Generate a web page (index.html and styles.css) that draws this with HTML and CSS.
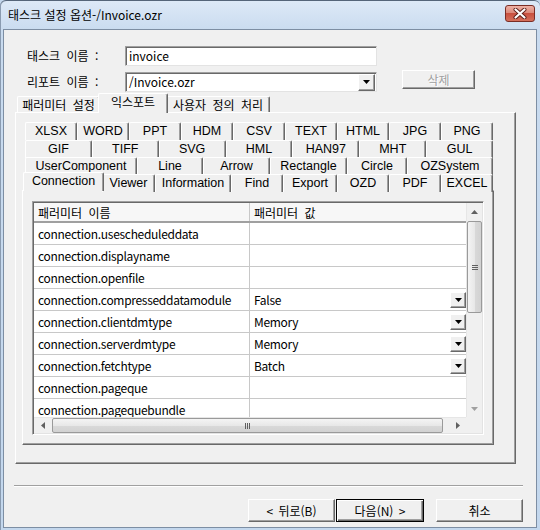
FILE: index.html
```html
<!DOCTYPE html>
<html lang="ko">
<head>
<meta charset="utf-8">
<title>태스크 설정 옵션</title>
<link rel="stylesheet" href="styles.css">
</head>
<body>
<div class="window">
  <div class="titlebar">
    <span class="title">태스크 설정 옵션-/Invoice.ozr</span>
    <div class="close">
      <svg width="14" height="11" viewBox="0 0 14 11"><path d="M2.5 1.5 L11.5 9.5 M11.5 1.5 L2.5 9.5" stroke="#5a1d17" stroke-width="4" stroke-linecap="round"/><path d="M2.5 1.5 L11.5 9.5 M11.5 1.5 L2.5 9.5" stroke="#fff" stroke-width="2.2" stroke-linecap="round"/></svg>
    </div>
  </div>
  <div class="client">
    <div class="frow">
      <span class="lbl">태스크 이름 :</span>
      <div class="textbox">invoice</div>
    </div>
    <div class="frow frow2">
      <span class="lbl">리포트 이름 :</span>
      <div class="combo"><span class="cval">/Invoice.ozr</span><span class="dd ddc"><svg width="7" height="4" viewBox="0 0 7 4"><polygon points="0,0 7,0 3.5,4" fill="#000"/></svg></span></div>
      <div class="btn btn-del">삭제</div>
    </div>
    <div class="mtabs">
      <div class="mtab mt1">패러미터 설정</div>
      <div class="mtab mt2 sel">익스포트</div>
      <div class="mtab mt3">사용자 정의 처리</div>
    </div>
    <div class="mpanel">
      <div class="itabs">
        <div class="trow r1">
          <div class="tab eq">XLSX</div><div class="tab eq">WORD</div><div class="tab eq">PPT</div><div class="tab eq">HDM</div><div class="tab eq">CSV</div><div class="tab eq">TEXT</div><div class="tab eq">HTML</div><div class="tab eq">JPG</div><div class="tab eq">PNG</div>
        </div>
        <div class="trow r2">
          <div class="tab eq">GIF</div><div class="tab eq">TIFF</div><div class="tab eq">SVG</div><div class="tab eq">HML</div><div class="tab eq">HAN97</div><div class="tab eq">MHT</div><div class="tab eq">GUL</div>
        </div>
        <div class="trow r3">
          <div class="tab w112">UserComponent</div><div class="tab w66">Line</div><div class="tab w67">Arrow</div><div class="tab w77">Rectangle</div><div class="tab w60">Circle</div><div class="tab w86">OZSystem</div>
        </div>
        <div class="trow r4">
          <div class="tab w77 tsel">Connection</div><div class="tab w53">Viewer</div><div class="tab w76">Information</div><div class="tab w52">Find</div><div class="tab w54">Export</div><div class="tab w52">OZD</div><div class="tab w52">PDF</div><div class="tab w52">EXCEL</div>
        </div>
      </div>
      <div class="ipanel">
        <div class="grid">
          <div class="data">
            <div class="row hdr"><div class="c1">패러미터 이름</div><div class="c2">패러미터 값</div></div>
            <div class="row"><div class="c1">connection.usescheduleddata</div><div class="c2"></div></div>
            <div class="row"><div class="c1">connection.displayname</div><div class="c2"></div></div>
            <div class="row"><div class="c1">connection.openfile</div><div class="c2"></div></div>
            <div class="row"><div class="c1">connection.compresseddatamodule</div><div class="c2"><span class="cv">False</span><span class="dd"><svg width="7" height="4" viewBox="0 0 7 4"><polygon points="0,0 7,0 3.5,4" fill="#000"/></svg></span></div></div>
            <div class="row"><div class="c1">connection.clientdmtype</div><div class="c2"><span class="cv">Memory</span><span class="dd"><svg width="7" height="4" viewBox="0 0 7 4"><polygon points="0,0 7,0 3.5,4" fill="#000"/></svg></span></div></div>
            <div class="row"><div class="c1">connection.serverdmtype</div><div class="c2"><span class="cv">Memory</span><span class="dd"><svg width="7" height="4" viewBox="0 0 7 4"><polygon points="0,0 7,0 3.5,4" fill="#000"/></svg></span></div></div>
            <div class="row"><div class="c1">connection.fetchtype</div><div class="c2"><span class="cv">Batch</span><span class="dd"><svg width="7" height="4" viewBox="0 0 7 4"><polygon points="0,0 7,0 3.5,4" fill="#000"/></svg></span></div></div>
            <div class="row"><div class="c1">connection.pageque</div><div class="c2"></div></div>
            <div class="row"><div class="c1">connection.pagequebundle</div><div class="c2"></div></div>
          </div>
          <div class="vsb">
            <div class="sbtn"><svg width="7" height="4" viewBox="0 0 7 4"><polygon points="0,4 7,4 3.5,0" fill="#606060"/></svg></div>
            <div class="vthumb"><span class="grip-h"></span></div>
            <div class="sfill"></div>
            <div class="sbtn"><svg width="7" height="4" viewBox="0 0 7 4"><polygon points="0,0 7,0 3.5,4" fill="#a0a0a0"/></svg></div>
          </div>
          <div class="hsb">
            <div class="sbtn"><svg width="4" height="7" viewBox="0 0 4 7"><polygon points="4,0 4,7 0,3.5" fill="#606060"/></svg></div>
            <div class="hthumb"><span class="grip-v"></span></div>
            <div class="sfill"></div>
            <div class="sbtn"><svg width="4" height="7" viewBox="0 0 4 7"><polygon points="0,0 0,7 4,3.5" fill="#606060"/></svg></div>
          </div>
          <div class="corner"></div>
        </div>
      </div>
    </div>
    <div class="sep"></div>
    <div class="btns">
      <div class="btn bb">&lt; 뒤로(B)</div>
      <div class="btn bb bdef">다음(N) &gt;</div>
      <div class="btn bb bcancel">취소</div>
    </div>
  </div>
</div>
</body>
</html>
```

FILE: styles.css
```css
* { box-sizing: border-box; margin: 0; padding: 0; }
html, body { width: 540px; height: 530px; overflow: hidden; }
body {
  font-family: "Noto Sans CJK KR", "Liberation Sans", sans-serif;
  font-size: 12px;
  color: #000;
  background: #c3d7ed;
}
.window {
  width: 540px;
  height: 530px;
  display: flex;
  flex-direction: column;
  background: linear-gradient(#dde9f7 0, #c9dbef 30px, #c3d7ed 100%);
  border-top: 1px solid #556579;
  border-radius: 6px 6px 0 0;
  box-shadow: inset 1px 0 #8a9bb0;
  padding: 0 3px 2px 3px;
}
.titlebar {
  height: 28px;
  display: flex;
  align-items: center;
  justify-content: space-between;
  padding-left: 5px;
}
.title { font-size: 12px; line-height: 14px; color: #000; }
.close {
  align-self: flex-start;
  margin-top: 4px;
  margin-right: 2px;
  width: 30px;
  height: 17px;
  border: 1px solid #7a2d25;
  border-radius: 3px;
  background: linear-gradient(#eeb1a5 0, #dc8a7b 45%, #c9503f 50%, #d4705c 100%);
  display: flex;
  align-items: center;
  justify-content: center;
}
.client {
  flex: 1;
  background: #f0f0f0;
  border: 1px solid #7d8ea3;
  padding-top: 16px;
  display: flex;
  flex-direction: column;
}
.frow { display: flex; align-items: center; height: 20px; margin-left: 23px; }
.frow2 { margin-top: 6px; align-items: flex-start; }
.lbl { width: 98px; line-height: 20px; word-spacing: 3px; }
.textbox, .combo {
  width: 252px;
  height: 20px;
  background: #fff;
  border: 1px solid;
  border-color: #a0a0a0 #e3e3e3 #e3e3e3 #a0a0a0;
  box-shadow: inset 1px 1px #696969;
  padding: 0 3px;
  line-height: 18px;
}
.combo { display: flex; align-items: center; padding-right: 1px; }
.cval { flex: 1; }
.dd {
  width: 16px;
  height: 16px;
  background: #f0f0f0;
  border: 1px solid;
  border-color: #fff #696969 #696969 #fff;
  box-shadow: inset -1px -1px #a0a0a0;
  display: flex;
  align-items: center;
  justify-content: center;
}
.ddc { width: 17px; height: 17px; }
.btn {
  background: #f0f0f0;
  border: 1px solid;
  border-color: #fff #696969 #696969 #fff;
  box-shadow: inset -1px -1px #a0a0a0;
  display: flex;
  align-items: center;
  justify-content: center;
  word-spacing: 2px;
}
.btn-del {
  width: 73px;
  height: 19px;
  margin-left: 25px;
  margin-top: -2px;
  color: #a0a0a0;
  text-shadow: 1px 1px #fff;
}
.mtabs {
  display: flex;
  align-items: flex-end;
  height: 19px;
  margin-top: 1px;
  margin-left: 13px;
}
.mtab {
  height: 16px;
  border: 1px solid;
  border-bottom: none;
  border-color: #fff #696969 #696969 #fff;
  box-shadow: inset -1px 0 #a0a0a0;
  border-radius: 2px 2px 0 0;
  text-align: center;
  line-height: 15px;
  background: #f0f0f0;
  word-spacing: 3px;
}
.mt1 { width: 83px; }
.mt2 { width: 70px; margin: 0 -2px -1px -2px; }
.mt3 { width: 104px; }
.mtab.sel { height: 20px; position: relative; z-index: 2; line-height: 16px; }
.mpanel {
  margin-left: 11px;
  width: 501px;
  height: 352px;
  border: 1px solid;
  border-color: #fff #696969 #696969 #fff;
  box-shadow: inset -1px -1px #a0a0a0;
  padding: 9px 0 0 6px;
}
.itabs { width: 472px; padding-left: 3px; }
.trow { display: flex; width: 468px; align-items: flex-start; }
.r1 { height: 18px; }
.r2, .r3 { height: 17px; }
.r4 { height: 16px; }
.tab {
  height: 18px;
  border: 1px solid;
  border-bottom: none;
  border-color: #fff #696969 #696969 #fff;
  box-shadow: inset -1px 0 #a0a0a0;
  border-radius: 2px 2px 0 0;
  background: #f0f0f0;
  text-align: center;
  line-height: 16px;
  font-family: "Liberation Sans", "Noto Sans CJK KR", sans-serif;
  font-size: 12.5px;
  white-space: nowrap;
  overflow: hidden;
}
.eq { flex: 1; }
.w52 { width: 52px; } .w53 { width: 53px; } .w54 { width: 54px; }
.w60 { width: 60px; } .w66 { width: 66px; } .w67 { width: 67px; }
.w76 { width: 76px; } .w77 { width: 77px; } .w86 { width: 86px; }
.w112 { width: 112px; }
.tab.tsel {
  width: 81px;
  height: 19px;
  margin: -2px -2px 0 -2px;
  position: relative;
  z-index: 2;
  line-height: 17px;
}
.ipanel {
  width: 472px;
  height: 255px;
  border: 1px solid;
  border-color: #fff #696969 #696969 #fff;
  box-shadow: inset -1px -1px #a0a0a0;
  padding: 10px 0 0 9px;
}
.grid {
  width: 452px;
  height: 234px;
  border: 1px solid;
  border-color: #a0a0a0 #fff #fff #a0a0a0;
  box-shadow: inset 1px 1px #696969, inset -1px -1px #e3e3e3;
  padding: 1px;
  display: grid;
  grid-template-columns: 432px 16px;
  grid-template-rows: 214px 16px;
}
.data { background: #fff; overflow: hidden; }
.row {
  display: flex;
  height: 22px;
  border-bottom: 1px solid #c8c8c8;
  letter-spacing: -0.3px;
}
.row.hdr {
  height: 20px;
  border-bottom: 2px solid #a0a0a0;
  background: #f7f7f7;
  letter-spacing: 0;
  word-spacing: 3px;
}
.c1 {
  width: 216px;
  border-right: 1px solid #c8c8c8;
  padding-left: 4px;
  display: flex;
  align-items: center;
  white-space: nowrap;
  overflow: hidden;
}
.c2 {
  flex: 1;
  padding-left: 4px;
  display: flex;
  align-items: center;
  white-space: nowrap;
}
.cv { flex: 1; }
.vsb {
  background: #f0f0f0;
  border-left: 1px solid #e6e6e6;
  display: flex;
  flex-direction: column;
}
.hsb {
  background: #f0f0f0;
  border-top: 1px solid #e6e6e6;
  display: flex;
}
.sbtn { display: flex; align-items: center; justify-content: center; flex: none; }
.vsb .sbtn { width: 15px; height: 17px; }
.hsb .sbtn { width: 17px; height: 15px; }
.sfill { flex: 1; }
.vthumb {
  margin-top: 1px;
  width: 15px;
  height: 92px;
  border: 1px solid #9a9a9a;
  border-radius: 2px;
  background: linear-gradient(to right, #f4f4f4, #e8e8e8 50%, #d9d9d9 51%, #d2d2d2);
  display: flex;
  align-items: center;
  justify-content: center;
}
.grip-h {
  width: 6px;
  height: 5px;
  border-top: 1px solid #606060;
  border-bottom: 1px solid #606060;
  background: linear-gradient(transparent 1px, #606060 1px, #606060 2px, transparent 2px);
}
.hthumb {
  margin-left: 1px;
  width: 391px;
  height: 15px;
  border: 1px solid #9a9a9a;
  border-radius: 2px;
  background: linear-gradient(#f4f4f4, #e8e8e8 50%, #d9d9d9 51%, #d2d2d2);
  display: flex;
  align-items: center;
  justify-content: center;
}
.grip-v {
  width: 5px;
  height: 6px;
  border-left: 1px solid #606060;
  border-right: 1px solid #606060;
  background: linear-gradient(to right, transparent 1px, #606060 1px, #606060 2px, transparent 2px);
}
.corner { background: #f0f0f0; }
.sep {
  margin-top: 21px;
  margin-left: 10px;
  width: 509px;
  height: 2px;
  border-top: 1px solid #a0a0a0;
  border-bottom: 1px solid #fff;
}
.btns { display: flex; margin-top: 12px; margin-left: 244px; }
.bb { width: 87px; height: 23px; }
.bdef {
  width: 88px;
  margin-left: 1px;
  border: 1px solid #000;
  box-shadow: inset 1px 1px #fff, inset -1px -1px #696969, inset -2px -2px #a0a0a0;
}
.bcancel { margin-left: 12px; }
```
